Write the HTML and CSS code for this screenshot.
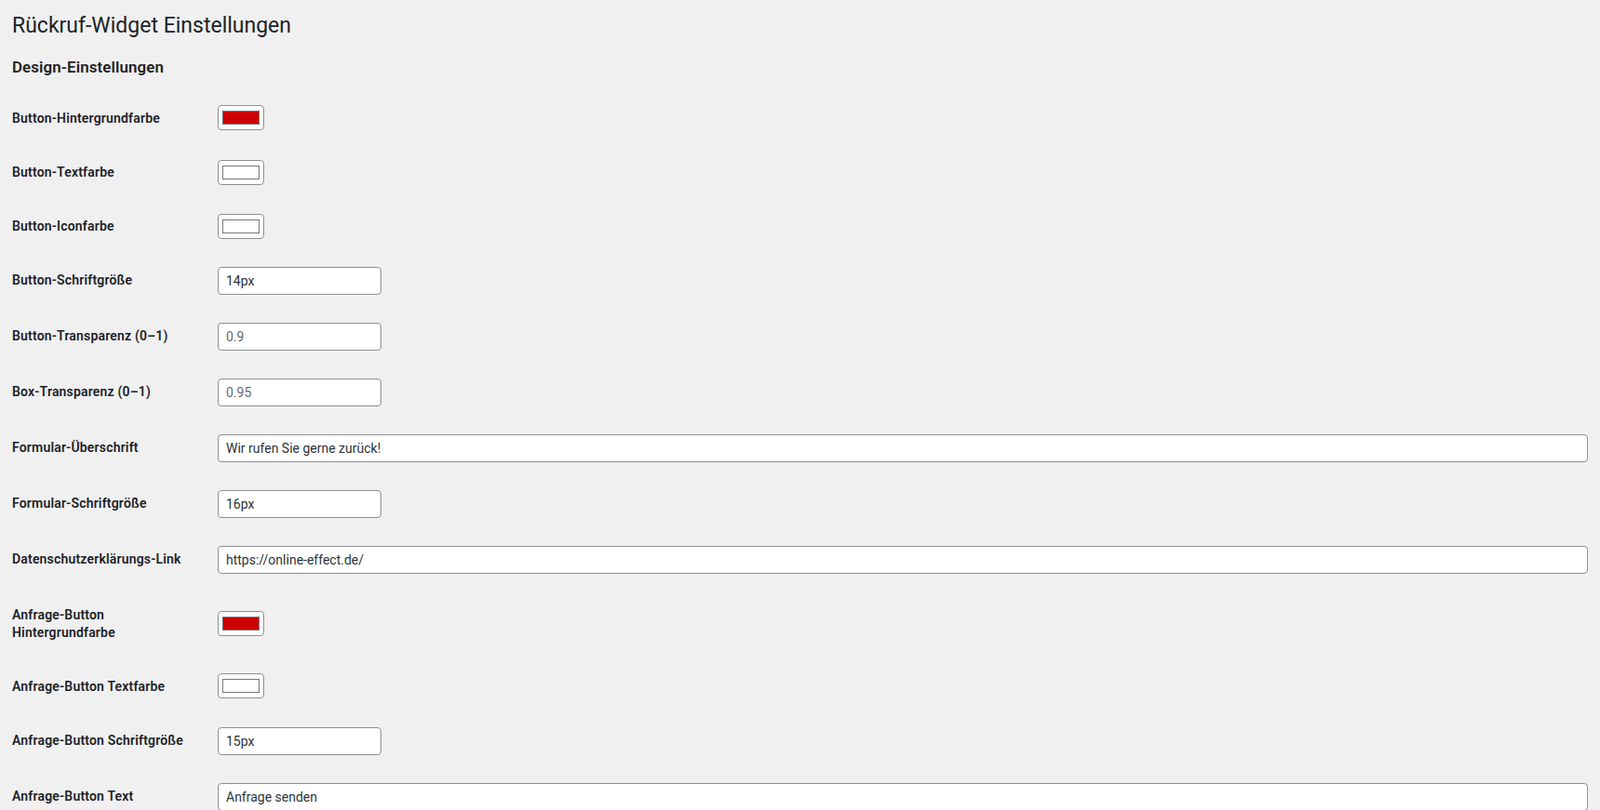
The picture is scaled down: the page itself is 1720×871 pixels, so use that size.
FILE: index.html
```html
<!DOCTYPE html>
<html lang="de">
<head>
    <meta charset="UTF-8">
    <meta name="viewport" content="width=device-width, initial-scale=1.0">
    <title>Rückruf-Widget Einstellungen</title>
    <link rel="stylesheet" href="styles.css">
</head>
<body>
    <div class="wrap">
        <h1>Rückruf-Widget Einstellungen</h1>
        <form method="post">
            <h2>Design-Einstellungen</h2>
            <table class="form-table">
                <tr>
                    <th><label for="btn_bg">Button-Hintergrundfarbe</label></th>
                    <td><input type="color" id="btn_bg" value="#cc0000"></td>
                </tr>
                <tr>
                    <th><label for="btn_text">Button-Textfarbe</label></th>
                    <td><input type="color" id="btn_text" value="#ffffff"></td>
                </tr>
                <tr>
                    <th><label for="btn_icon">Button-Iconfarbe</label></th>
                    <td><input type="color" id="btn_icon" value="#ffffff"></td>
                </tr>
                <tr>
                    <th><label for="btn_size">Button-Schriftgröße</label></th>
                    <td><input type="text" class="small-text" id="btn_size" value="14px"></td>
                </tr>
                <tr>
                    <th><label for="btn_opacity">Button-Transparenz (0–1)</label></th>
                    <td><input type="text" class="small-text" id="btn_opacity" placeholder="0.9"></td>
                </tr>
                <tr>
                    <th><label for="box_opacity">Box-Transparenz (0–1)</label></th>
                    <td><input type="text" class="small-text" id="box_opacity" placeholder="0.95"></td>
                </tr>
                <tr>
                    <th><label for="form_title">Formular-Überschrift</label></th>
                    <td><input type="text" class="large-text" id="form_title" value="Wir rufen Sie gerne zurück!"></td>
                </tr>
                <tr>
                    <th><label for="form_size">Formular-Schriftgröße</label></th>
                    <td><input type="text" class="small-text" id="form_size" value="16px"></td>
                </tr>
                <tr>
                    <th><label for="privacy">Datenschutzerklärungs-Link</label></th>
                    <td><input type="text" class="large-text" id="privacy" value="https://online-effect.de/"></td>
                </tr>
                <tr>
                    <th><label for="req_bg">Anfrage-Button Hintergrundfarbe</label></th>
                    <td><input type="color" id="req_bg" value="#cc0000"></td>
                </tr>
                <tr>
                    <th><label for="req_text">Anfrage-Button Textfarbe</label></th>
                    <td><input type="color" id="req_text" value="#ffffff"></td>
                </tr>
                <tr>
                    <th><label for="req_size">Anfrage-Button Schriftgröße</label></th>
                    <td><input type="text" class="small-text" id="req_size" value="15px"></td>
                </tr>
                <tr>
                    <th><label for="req_label">Anfrage-Button Text</label></th>
                    <td><input type="text" class="large-text" id="req_label" value="Anfrage senden"></td>
                </tr>
            </table>
        </form>
    </div>
</body>
</html>
```

FILE: styles.css
```css
html, body {
    margin: 0;
    background-color: #f0f0f1;
}
body {
    font-family: Roboto, "Noto Sans", sans-serif;
    font-size: 13px;
    color: #1d2327;
}
.wrap {
    padding: 13px 3px 0 13px;
}
h1 {
    font-size: 23px;
    font-weight: 400;
    line-height: 1.3;
    margin: 0;
    padding: 0;
}
h2 {
    font-size: 16.9px;
    font-weight: 600;
    line-height: 1.3;
    letter-spacing: 0.1px;
    margin: 0;
    padding-top: 19px;
}
.form-table {
    border-collapse: collapse;
    width: 100%;
    margin-top: 14px;
}
.form-table th {
    box-sizing: border-box;
    width: 211px;
    padding: 20px 10px 20px 0;
    text-align: left;
    vertical-align: top;
    font-size: 14px;
    font-weight: 600;
    line-height: 1.3;
    letter-spacing: 0.18px;
}
.form-table td {
    padding: 15px 10px;
    line-height: 1.3;
    vertical-align: middle;
}
input[type="text"] {
    box-sizing: border-box;
    height: 30px;
    margin: 0;
    padding: 0 8px;
    font-family: inherit;
    font-size: 14px;
    line-height: 2;
    color: #2c3338;
    background-color: #fff;
    border: 1px solid #8c8f94;
    border-radius: 4px;
    vertical-align: middle;
}
input::placeholder {
    color: #646970;
}
.small-text {
    width: 176px;
}
.large-text {
    width: 100%;
}
input[type="color"] {
    box-sizing: border-box;
    width: 50px;
    height: 27px;
    margin: 0;
    padding: 1px 2px;
    background-color: #fff;
    border: 1px solid #8c8f94;
    border-radius: 4px;
    vertical-align: middle;
    cursor: pointer;
}
input[type="color"]::-webkit-color-swatch-wrapper {
    padding: 4px 2px;
}
input[type="color"]::-webkit-color-swatch {
    border: 1px solid #777;
    border-radius: 0;
}
```
